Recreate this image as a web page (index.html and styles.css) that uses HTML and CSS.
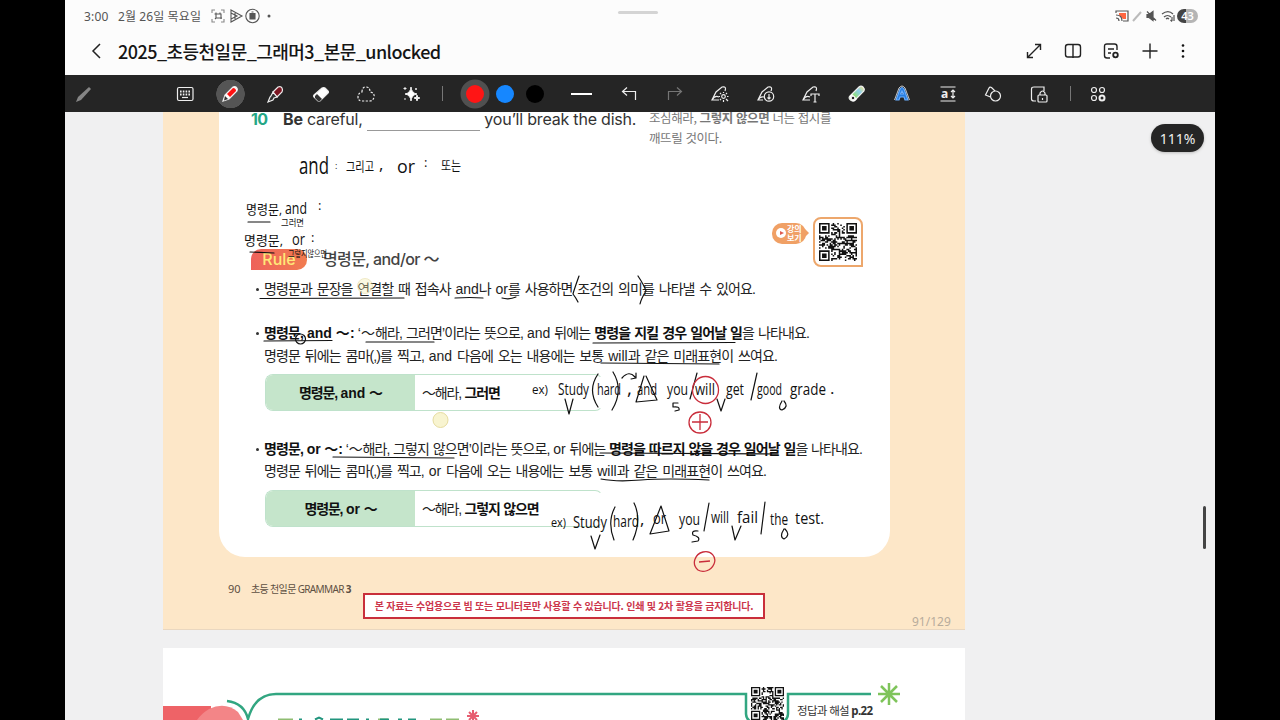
FILE: index.html
```
<!DOCTYPE html>
<html lang="ko">
<head>
  <meta charset="UTF-8">
  <meta name="viewport" content="width=device-width, initial-scale=1.0">
  <title>2025_초등천일문_그래머3_본문_unlocked</title>
  <link rel="stylesheet" href="styles.css">
</head>
<body>
  <div class="app">
    <!-- Status bar -->
    <div class="status-bar">
      <span class="time">3:00</span>
      <span class="date">2월 26일 목요일</span>
      <svg class="status-icons" width="62" height="16" viewBox="0 0 62 16" fill="none" stroke="#555" stroke-width="1.1">
        <path d="M1 5V2h3M10 2h3v3M13 11v3h-3M4 14H1v-3" stroke="#888"/>
        <path d="M3.500 6h6.500v5M5 4.500V10h6M9 4.500V6M4 11l1-1"/>
        <path d="M20 2l11 6-11 6zM20 5l6 3-6 3M24 5v6"/>
        <circle cx="41.500" cy="8" r="6.700"/><path d="M39 5.500h5V11h-5zM40.500 4h2" fill="#555"/>
        <circle cx="58" cy="8" r="1.500" fill="#555" stroke="none"/>
      </svg>
      <svg class="system-icons" width="62" height="16" viewBox="0 0 62 16" fill="none" stroke="#555" stroke-width="1.200">
        <path d="M1 5V3h12v10H8"/><path d="M4 5h7v6H8L4 7z" fill="#ff6742" stroke="none"/><path d="M1 7c4 0 6 2 6 6M1 10c2 0 3 1 3 3"/>
        <path d="M18 13l8-9" stroke="#bbb" stroke-width="2"/>
        <path d="M32 6.500h2l4-3v9l-4-3h-2zM32 3.500l9 9" fill="#555"/>
        <path d="M47 6c4-3 8-3 11 0M49 9c2-2 5-2 7 0M51 11c1-1 2-1 3 0M57 9v4M55.500 12l1.500 1.500M59 7v6"/>
      </svg>
      <span class="battery">43</span>
      <span class="handle"></span>
    </div>

    <!-- Title bar -->
    <header class="title-bar">
      <svg class="back" width="12" height="18" viewBox="0 0 12 18"><path d="M10 2L3 9l7 7"/></svg>
      <h1>2025_초등천일문_그래머3_본문_unlocked</h1>
      <div class="title-actions">
        <svg viewBox="0 0 20 20"><path d="M3.500 16.500l13-13M11 3.500h5.500V9M3.500 11v5.500H9"/></svg>
        <svg viewBox="0 0 20 20"><rect x="2.500" y="3.500" width="15" height="12.500" rx="2.500"/><path d="M10 3.500v13.500"/></svg>
        <svg viewBox="0 0 20 20"><path d="M9 17H6q-2.500 0-2.500-2.500v-9Q3.500 3 6 3h7.500Q16 3 16 5.500V9M7 8h6M7 12h3"/><circle cx="14.500" cy="14" r="2.300" stroke-width="1.800"/></svg>
        <svg viewBox="0 0 20 20"><path d="M10 2.500v15M2.500 10h15"/></svg>
        <svg viewBox="0 0 20 20" class="more"><circle cx="10" cy="4.500" r="1.300"/><circle cx="10" cy="10" r="1.300"/><circle cx="10" cy="15.500" r="1.300"/></svg>
      </div>
    </header>

    <!-- Pen toolbar -->
    <nav class="toolbar">
      <div class="pen-toggle"><svg viewBox="0 0 20 20"><path d="M2 18l2-5L15 3l2 2L7 16z" fill="#858585" stroke="none"/></svg></div>
      <div class="tools">
        <span><svg viewBox="0 0 20 20"><rect x="2.500" y="3.500" width="15.500" height="13" rx="1.500"/><path d="M5 7.500h10M5 10.500h10" stroke-dasharray="1.600 1.200" stroke-width="1.800"/><path d="M7 13.500h6"/></svg></span>
        <span class="active"><svg viewBox="0 0 20 20"><path d="M3 17l2-6 8-8q2-1 3.500.5T17 7l-8 8z" fill="#fff"/><path d="M7 10l6-6q3 0 3 3l-6 6z" fill="#f11" stroke="none"/><path d="M5 12l3 3-4 1.500z" fill="#333" stroke="none"/></svg></span>
        <span><svg viewBox="0 0 20 20"><path d="M8 8l5-5q3-1 4 1t0 4l-5 5z" fill="#7c1622"/><path d="M8 8l4 5-3 1-1 2-5 2 2-5 1-1z" fill="#333"/></svg></span>
        <span><svg viewBox="0 0 20 20"><path d="M3 11l8-7q2-1 3 0l3 3q1 1 0 2l-8 8H7l-4-4q-1-1 0-2z" fill="#fff"/><path d="M4 12l2-2 5 5-2 2H7l-3-3z" fill="#333" stroke="none"/></svg></span>
        <span><svg viewBox="0 0 20 20"><path d="M6 8q0-5 4-5t4 5q5 1 4 5-1 4-4 4H6q-4 0-4-4 0-4 4-5z" stroke-dasharray="2.200 1.500"/></svg></span>
        <span><svg viewBox="0 0 20 20"><path d="M10 3q.5 6 6 7-5.500 1-6 7-.5-6-6-7 5.500-1 6-7zM16 11q0 3 3 3-3 0-3 3 0-3-3-3 3 0 3-3zM4 3v3M2.500 4.500h3M15 4v2M14 5h2M4 14v2" fill="#fff" stroke-width="1"/></svg></span>
      </div>
      <i class="divider"></i>
      <div class="colors"><b class="red"></b><b class="blue"></b><b class="black"></b></div>
      <div class="tools more-tools">
        <span class="stroke-width"><i></i></span>
        <span><svg viewBox="0 0 20 20"><path d="M8 3.500L3.500 7.500 8 11.500M4 7.500h12.500V16"/></svg></span>
        <span class="disabled"><svg viewBox="0 0 20 20"><path d="M12 3.500l4.500 4-4.500 4M16 7.500H3.500V16"/></svg></span>
        <span><svg viewBox="0 0 20 20"><path d="M9 16H2l4-8 6-5q5-1 3 4M2 16q3-5 7-3"/><circle cx="13.500" cy="12.500" r="1.800"/><path d="M13.500 8v1M13.500 16v2M9 12.500h1M17 12.500h1.500M10 9l1 1M16 15l2 2M17 9l-1 1M10 16l1-1"/></svg></span>
        <span><svg viewBox="0 0 20 20"><path d="M7 16H2l4-8 6-5q5-1 3 4M2 16q2-4 6-3"/><circle cx="13" cy="12.500" r="4.700"/><path d="M13 10v5M11.500 13.500L13 15l1.500-1.500"/></svg></span>
        <span><svg viewBox="0 0 20 20"><path d="M9 16H2l4-8 6-5q5-1 3 4M2 16q3-5 7-3M10 12v-2h8v2M14 10v8M12.500 18h3"/></svg></span>
        <span><svg viewBox="0 0 20 20"><defs><linearGradient id="hl" x1="0" y1="1" x2="1" y2="0"><stop offset=".3" stop-color="#91e16b"/><stop offset=".65" stop-color="#8ccfeb"/><stop offset="1" stop-color="#ffe779"/></linearGradient></defs><path d="M3 12l9-9q2-2 4 0t1 4l-9 9q-2 2-4.500 0T3 12z" fill="url(#hl)"/><path d="M3 12l2-2 5 5-2 2q-2 1-4-1t-1-4z" fill="#fff" stroke="none"/><circle cx="6" cy="14" r="1.800" fill="#252525"/></svg></span>
        <span><svg viewBox="0 0 20 20"><path d="M4 16L8 5q2-3 4 0l4 11h-3l-1-3H8l-1 3zM8.500 10h3L10 7z" fill="#267de0" stroke="#6cafff"/><path d="M2.500 16L7 4q3-4 6 0l4.500 12" stroke-width=".8"/></svg></span>
        <span><svg viewBox="0 0 20 20"><path d="M2.500 3h15M2.500 17h15M15 6v8M13 8l2-2 2 2M13 12l2 2 2-2"/><text x="3" y="14" class="icon-a">a</text></svg></span>
        <span><svg viewBox="0 0 20 20"><path d="M7.500 13L2.500 11 6 4q1-1.500 2.500-.5L12 7"/><circle cx="12.500" cy="12" r="5"/></svg></span>
        <span><svg viewBox="0 0 20 20"><path d="M7 17H5q-2.500 0-2.500-2V5q0-2 2.500-2h10v4"/><rect x="9" y="11" width="9" height="7" rx="1"/><path d="M11 11V9q2.500-4 5 0v2M13.500 14v2"/></svg></span>
      </div>
      <i class="divider"></i>
      <div class="tools last"><span><svg viewBox="0 0 20 20"><circle cx="6" cy="6" r="2.500"/><circle cx="14" cy="6" r="2.500"/><circle cx="6" cy="14" r="2.500"/><circle cx="14" cy="14" r="2.500" stroke-width="2"/></svg></span></div>
    </nav>

    <main class="workspace">
      <article class="page">
        <section class="card">
          <div class="question">
            <b class="number">10</b>
            <p class="sentence"><b>Be</b> careful, <span class="blank"></span> you’ll break the dish.</p>
            <p class="hint">조심해라, <b>그렇지 않으면</b> 너는 접시를<br>깨뜨릴 것이다.</p>
          </div>
          <div class="lecture">
            <span class="lecture-label"><i></i>강의<br>보기</span>
            <div class="qr-frame"><svg class="qr" data-seed="7"></svg></div>
          </div>
          <div class="rule-title"><b>Rule</b><h2>명령문, and/or ～</h2></div>
          <ul class="rules">
            <li><p class="w-491">명령문과 문장을 연결할 때 접속사 <i>and</i>나 <i>or</i>를 사용하면 조건의 의미를 나타낼 수 있어요.</p></li>
            <li>
              <p class="w-545"><b>명령문, <i>and</i> ～:</b> ‘～해라, 그러면’이라는 뜻으로, <i>and</i> 뒤에는 <b>명령을 지킬 경우 일어날 일</b>을 나타내요.</p>
              <p class="w-513">명령문 뒤에는 콤마(,)를 찍고, <i>and</i> 다음에 오는 내용에는 보통 <i>will</i>과 같은 미래표현이 쓰여요.</p>
              <div class="pattern"><b>명령문, <i>and</i> ～</b><span>～해라, <b>그러면</b></span></div>
            </li>
            <li>
              <p class="w-598"><b>명령문, <i>or</i> ～:</b> ‘～해라, 그렇지 않으면’이라는 뜻으로, <i>or</i> 뒤에는 <b>명령을 따르지 않을 경우 일어날 일</b>을 나타내요.</p>
              <p class="w-502">명령문 뒤에는 콤마(,)를 찍고, <i>or</i> 다음에 오는 내용에는 보통 <i>will</i>과 같은 미래표현이 쓰여요.</p>
              <div class="pattern"><b>명령문, <i>or</i> ～</b><span>～해라, <b>그렇지 않으면</b></span></div>
            </li>
          </ul>
        </section>
        <footer>
          <span class="folio">90</span>
          <span class="book">초등 천일문 GRAMMAR <b>3</b></span>
          <strong class="notice">본 자료는 수업용으로 빔 또는 모니터로만 사용할 수 있습니다. 인쇄 및 2차 활용을 금지합니다.</strong>
          <span class="page-count">91/129</span>
        </footer>
      </article>

      <article class="page next-page">
        <svg class="page-art" viewBox="163 648 802 72" fill="none">
          <path d="M163 706h48v14h-48z" fill="#ee6367"/>
          <path d="M197 720q4-6 12-11 16-8 29 3l5 8z" fill="#f38587"/>
          <path d="M227 701q17 2 21 18 7-25 28-25h470v20q0 5 5 8M783 722q5-3 5-8v-20h83" stroke="#32a681" stroke-width="2.500"/>
          <path d="M278 719.500h15M378 719.500h10M430 719.500h12M446 719.500h13" stroke="#8fbd72" stroke-width="2"/>
          <path d="M299 719.500h3M315 719.500l4-2 4 2M330 719.500h13M347 719.500h12M366 719.500h3M380 719.500h9M398 719.500h4M408 719.500h8" stroke="#22957e" stroke-width="2"/>
          <path d="M473 710v12M467 716h12M469 712l8 8M477 712l-8 8" stroke="#e75d70" stroke-width="2"/>
          <path d="M889 683v22M878 694h22M881 686l16 16M897 686l-16 16" stroke="#7fc45b" stroke-width="2.500"/>
        </svg>
        <div class="answers"><svg class="qr small" data-seed="19"></svg><span>정답과 해설 <b>p.22</b></span></div>
      </article>

      <!-- Handwritten notes -->
      <svg class="ink" viewBox="65 112 1150 608">
        <g class="hand">
          <text x="299" y="174" textLength="30" lengthAdjust="spacingAndGlyphs" class="xl">and</text><text x="335" y="169" class="sm">:</text>
          <text x="346" y="171" textLength="28" lengthAdjust="spacingAndGlyphs" class="kr">그리고</text><text x="379" y="170">,</text>
          <text x="397" y="173" textLength="18" lengthAdjust="spacingAndGlyphs" class="lg">or</text><text x="424" y="167" class="md">:</text>
          <text x="441" y="170" textLength="20" lengthAdjust="spacingAndGlyphs" class="kr">또는</text>
          <text x="246" y="214" textLength="36" lengthAdjust="spacingAndGlyphs" class="kr">명령문,</text><text x="285" y="214" textLength="22" lengthAdjust="spacingAndGlyphs">and</text><text x="318" y="210" class="md">:</text>
          <text x="281" y="226" textLength="23" lengthAdjust="spacingAndGlyphs" class="kr sm">그러면</text>
          <text x="244" y="245" textLength="39" lengthAdjust="spacingAndGlyphs" class="kr">명령문,</text><text x="292" y="245" textLength="13" lengthAdjust="spacingAndGlyphs">or</text><text x="311" y="242" class="md">:</text>
          <text x="288" y="257" textLength="39" lengthAdjust="spacingAndGlyphs" class="kr sm">그렇지않으면</text>
          <text x="532" y="394" textLength="16" lengthAdjust="spacingAndGlyphs" class="md">ex)</text><text x="558" y="395" textLength="31" lengthAdjust="spacingAndGlyphs">Study</text><text x="597" y="395" textLength="24" lengthAdjust="spacingAndGlyphs">hard</text><text x="627" y="395" class="lg">,</text><text x="637" y="395" textLength="20" lengthAdjust="spacingAndGlyphs">and</text>
          <text x="667" y="395" textLength="21" lengthAdjust="spacingAndGlyphs">you</text><text x="695" y="395" textLength="20" lengthAdjust="spacingAndGlyphs">will</text><text x="726" y="395" textLength="18" lengthAdjust="spacingAndGlyphs">get</text><text x="757" y="395" textLength="25" lengthAdjust="spacingAndGlyphs">good</text><text x="790" y="395" textLength="36" lengthAdjust="spacingAndGlyphs">grade</text><text x="830" y="394">.</text>
          <text x="551" y="527" textLength="15" lengthAdjust="spacingAndGlyphs" class="md">ex)</text><text x="573" y="528" textLength="34" lengthAdjust="spacingAndGlyphs">Study</text><text x="613" y="527" textLength="26" lengthAdjust="spacingAndGlyphs">hard</text><text x="640" y="525">,</text><text x="653" y="524" textLength="13" lengthAdjust="spacingAndGlyphs">or</text>
          <text x="679" y="525" textLength="21" lengthAdjust="spacingAndGlyphs">you</text><text x="711" y="523" textLength="18" lengthAdjust="spacingAndGlyphs">will</text><text x="737" y="523" textLength="21" lengthAdjust="spacingAndGlyphs">fail</text><text x="770" y="525" textLength="18" lengthAdjust="spacingAndGlyphs">the</text><text x="795" y="524" textLength="29" lengthAdjust="spacingAndGlyphs">test.</text>
        </g>
        <path class="stroke" d="M248 222h22M250 252l24 1M260 298.500l144-.5M455 298q15-1 28 0M502 298q7 2 14-1M264 341l68-.5M366 342h68M593 343l142-.5M601 363l118 1M333 457l121 1M600 453l178 1M601 479q15 3 40 1t68 0"/>
        <circle class="stroke" cx="300.500" cy="339" r="5"/>
        <path class="stroke" d="M579 276q-5 14-6 18 3 4 5 8M638 276q6 9 8 15-5 8-6 13M565 399l4 15 4-15M598 374q-11 16 0 33M613 372q11 18-1 38M622 378q7-8 13-1M636 373v5l-5 1M644 376l-8 26 21-2-11-24M697 373l-7 26M678 403h-5v4q7-1 6 3l-4 1M717 399l4 12 4-12M757 373l-6 27M782 401q-5 8 0 9 7-3 2-9M591 536l4 13 5-14M615 507q-8 15-1 33M634 503q8 16-1 37M661 506l-11 28 19-3-8-25M709 503l-5 28M698 531q-7-1-5 4 8 2 5 6l-6 1M732 526l3 14 6-14M765 502l-4 32M784 529q-5 8 0 10 7-4 1-10"/>
        <g class="red-ink"><ellipse cx="705.500" cy="390" rx="13" ry="13.500"/><ellipse cx="700" cy="422.500" rx="11" ry="10.500"/><path d="M692 422h16M700 414v16M698 570c-7-6-3-16 5-18s14 5 11 12-11 9-16 6zM699 562l11-1"/></g>
        <g class="marker"><circle class="faint" cx="365" cy="286" r="7.500"/><circle cx="440.500" cy="420" r="7.500"/></g>
      </svg>
      <span class="zoom-level">111%</span>
      <span class="scrollbar"></span>
    </main>
  </div>
  <script src="script.js"></script>
</body>
</html>
```
FILE: styles.css
```
* {
  box-sizing: border-box;
}

body {
  margin: 0;
  background: #000;
  font-family: "Noto Sans", "Noto Sans CJK KR", sans-serif;
}

h1, h2, p, ul {
  margin: 0;
  padding: 0;
}

.app {
  width: 1150px;
  height: 720px;
  margin: 0 auto;
  overflow: hidden;
  background: #fcfcfc;
  display: flex;
  flex-direction: column;
}

.status-bar {
  position: relative;
  display: flex;
  align-items: center;
  height: 32px;
  padding: 0 17px 0 19px;
  font-size: 12px;
  color: #555;
}

.time {
  width: 34px;
  letter-spacing: 0.2px;
}

.date {
  width: 84px;
  letter-spacing: 0.1px;
  white-space: nowrap;
}

.status-icons {
  margin-left: 9px;
}

.system-icons {
  margin-left: auto;
}

.battery {
  width: 21px;
  height: 14px;
  border-radius: 7px;
  background: linear-gradient(90deg, #444 43%, #b5b5b5 43%);
  color: #fff;
  font-size: 11px;
  line-height: 14px;
  text-align: center;
  font-weight: 600;
}

.handle {
  position: absolute;
  left: 553px;
  top: 11px;
  width: 40px;
  height: 3px;
  border-radius: 2px;
  background: #d4d4d4;
}

.title-bar {
  height: 43px;
  display: flex;
  align-items: center;
  padding: 0 22px 6px 25px;
}

.back {
  fill: none;
  stroke: #222;
  stroke-width: 1.5;
}

h1 {
  margin-left: 16px;
  font-size: 18px;
  font-weight: 500;
  color: #151515;
  font-family: "Noto Sans CJK KR", sans-serif;
  letter-spacing: -0.53px;
  white-space: nowrap;
}

.title-actions {
  margin-left: auto;
  display: flex;
  gap: 18.500px;
}

.title-actions svg,
.toolbar svg {
  width: 20px;
  height: 20px;
  fill: none;
  stroke: #222;
  stroke-width: 1.4;
  overflow: visible;
}

.title-actions svg:last-child {
  margin-left: -5px;
}

.title-actions .more {
  fill: #111;
  stroke: none;
}

.toolbar {
  position: relative;
  height: 37px;
  flex: none;
  background: #252525;
  display: flex;
  align-items: center;
}

.pen-toggle {
  width: 38px;
  padding-left: 9px;
  display: flex;
  align-items: center;
}

.toolbar svg {
  stroke: #eee;
  stroke-width: 1.2;
}

.tools {
  display: flex;
  margin-left: 59.5px;
}

.tools span {
  width: 45.200px;
  height: 36px;
  display: flex;
  align-items: center;
  justify-content: center;
}

.tools .active {
  background: radial-gradient(circle, #555 14px, transparent 14.500px);
}

.disabled {
  opacity: 0.4;
}

.divider {
  width: 1px;
  height: 15px;
  background: #777;
  margin-left: 8.5px;
}

.colors {
  display: flex;
  gap: 12px;
  margin-left: 22.5px;
}

.colors b {
  width: 18px;
  height: 18px;
  border-radius: 50%;
}

.colors .red {
  background: #ff1515;
  box-shadow: 0 0 0 5.500px #505050;
}

.colors .blue {
  background: #1687ff;
}

.colors .black {
  background: #000;
}

.more-tools {
  margin-left: 15.5px;
}

.more-tools span {
  width: 45.500px;
}

.more-tools .stroke-width {
  margin-right: 2px;
}

.stroke-width i {
  width: 21px;
  height: 2px;
  background: #fff;
}

.icon-a {
  font: 700 12px "Noto Sans", sans-serif;
  fill: #eee;
  stroke: none;
}

.tools.last {
  margin-left: 4px;
}

.workspace {
  position: relative;
  flex: 1;
  overflow: hidden;
  background: #f0f0f1;
}

.page {
  width: 802px;
  height: 530px;
  margin: -12px 0 0 98px;
  background: #fde7c8;
  border-bottom: 1px solid #e9d7c0;
}

.card {
  position: relative;
  width: 671px;
  height: 457px;
  margin-left: 56px;
  padding-left: 32px;
  background: #fff;
  border-radius: 0 0 26px 26px;
}

.question {
  display: flex;
  height: 117px;
  padding-top: 7px;
}

.number {
  width: 32px;
  font: 700 16px/25px Inter, sans-serif;
  letter-spacing: -0.6px;
  color: #25a786;
}

.sentence {
  width: 366px;
  font: 16px/25px Inter, sans-serif;
  letter-spacing: -0.2px;
  color: #333;
  white-space: nowrap;
}

.blank {
  display: inline-block;
  width: 113px;
  height: 10px;
  border-bottom: 1px solid #999;
  vertical-align: -6px;
}

.hint {
  padding-top: 1px;
  font: 12.500px/20px "Noto Sans CJK KR", sans-serif;
  color: #777;
  letter-spacing: -0.4px;
  white-space: nowrap;
}

.lecture {
  position: absolute;
  left: 553px;
  top: 117px;
  display: flex;
  gap: 7px;
}

.lecture-label {
  position: relative;
  width: 34px;
  height: 21px;
  margin-top: 6px;
  padding: 1px 0 0 15px;
  border-radius: 10px;
  background: #f0a065;
  color: #fff;
  font-size: 8px;
  font-weight: 700;
  line-height: 9px;
}

.lecture-label::after {
  content: "";
  position: absolute;
  right: -3px;
  top: 6px;
  border: 4px solid transparent;
  border-left-color: #f0a065;
  border-right: 0;
}

.lecture-label i {
  position: absolute;
  left: 4px;
  top: 5px;
  width: 10px;
  height: 10px;
  border-radius: 50%;
  background: #fff;
}

.lecture-label i::after {
  content: "";
  position: absolute;
  left: 4px;
  top: 2.500px;
  border: 2.500px solid transparent;
  border-left: 4px solid #df5c50;
  border-right: 0;
}

.qr-frame {
  width: 50px;
  height: 50px;
  border: 2px solid #eda76c;
  border-radius: 8px 8px 0 8px;
  padding: 4px;
}

.qr {
  display: block;
  width: 38px;
  height: 38px;
}

.rule-title {
  display: flex;
  align-items: center;
  height: 24px;
  margin-top: 30px;
}

.rule-title b {
  width: 56px;
  height: 21px;
  border-radius: 10px 10px 10px 0;
  background: linear-gradient(90deg, #ee625b, #f17c50);
  color: #ffe878;
  font: 500 16px/20px Inter, sans-serif;
  text-align: center;
}

h2 {
  margin-left: 16px;
  color: #444;
  font: 500 16px/24px Inter, "Noto Sans CJK KR", sans-serif;
  letter-spacing: -0.6px;
  white-space: nowrap;
}

.rules {
  list-style: none;
  margin-left: 13px;
  padding-top: 7px;
  font: 14px/22.500px "Liberation Sans", "Noto Sans CJK KR", sans-serif;
  letter-spacing: -0.9px;
  color: #222;
}

.rules i {
  font-style: normal;
  letter-spacing: 0;
}

.rules li {
  position: relative;
  margin-bottom: 21.500px;
}

.rules li + li + li {
  margin-top: 26.500px;
}

.rules li::before {
  content: "";
  position: absolute;
  left: -8px;
  top: 10px;
  width: 3px;
  height: 3px;
  border-radius: 50%;
  background: #333;
}

.rules p {
  white-space: nowrap;
  text-align: justify;
  text-align-last: justify;
}

.rules b {
  color: #111;
}

.w-491 { width: 491px; }
.w-545 { width: 545px; }
.w-513 { width: 513px; }
.w-598 { width: 598px; }
.w-502 { width: 502px; }

.pattern {
  display: flex;
  width: 338px;
  height: 37px;
  margin-top: 7px;
  margin-left: 1px;
  border: 1px solid #bfe2cb;
  border-right-color: transparent;
  border-radius: 8px;
  line-height: 36px;
  letter-spacing: -1.2px;
  word-spacing: 1px;
  overflow: hidden;
}

.pattern > b {
  width: 149px;
  background: #c5e5cb;
  text-align: center;
}

.pattern > span {
  padding-left: 7px;
}

footer {
  display: flex;
  position: relative;
  height: 72px;
  padding: 22px 0 0 65px;
  font: 10px/20px "Noto Sans", "Noto Sans CJK KR", sans-serif;
  color: #5d5043;
}

.folio {
  width: 23px;
  font-size: 11px;
}

.book {
  width: 112px;
  letter-spacing: -0.65px;
  white-space: nowrap;
}

.notice {
  width: 402px;
  height: 26px;
  margin-top: 14px;
  border: 2px solid #c92f3b;
  background: #fff;
  color: #cc354b;
  font: 700 10px/21px "Noto Sans CJK KR", sans-serif;
  letter-spacing: -0.2px;
  text-align: center;
  white-space: nowrap;
}

.page-count {
  margin: 33px 0 0 147px;
  font-size: 12px;
  color: #b8ac9c;
}

.next-page {
  position: relative;
  height: 72px;
  margin-top: 18px;
  background: #fff;
  border: 0;
}

.page-art {
  position: absolute;
  inset: 0;
  width: 802px;
  height: 72px;
}

.answers {
  position: relative;
  display: flex;
  gap: 13px;
  padding: 39px 0 0 588px;
  font: 11.500px/17px "Noto Sans", "Noto Sans CJK KR", sans-serif;
  color: #333;
}

.answers .small {
  width: 33px;
  height: 33px;
}

.answers span {
  padding-top: 15px;
  white-space: nowrap;
  letter-spacing: -0.65px;
}

.ink {
  position: absolute;
  inset: 0;
  width: 1150px;
  height: 608px;
}

.hand {
  font: 17px "Open Sans", "Noto Sans CJK KR", sans-serif;
  fill: #111;
}

.hand .xl { font-size: 24px; }
.hand .lg { font-size: 19px; }
.hand .md { font-size: 13px; }
.hand .kr { font-size: 13px; }
.hand .sm { font-size: 9px; }

.stroke {
  fill: none;
  stroke: #111;
  stroke-width: 1.2;
  stroke-linecap: round;
  stroke-linejoin: round;
}

.red-ink {
  fill: none;
  stroke: #c92d3b;
  stroke-width: 1.3;
}

.marker {
  fill: #f3edb0;
  fill-opacity: 0.6;
  stroke: #e6dca0;
}

.marker .faint {
  opacity: 0.6;
}

.zoom-level {
  position: absolute;
  left: 1086px;
  top: 12px;
  width: 53px;
  height: 28px;
  border-radius: 14px;
  background: #252525;
  color: #eee;
  font-size: 14px;
  line-height: 29px;
  text-align: center;
  box-shadow: 0 1px 3px #bbb;
}

.scrollbar {
  position: absolute;
  left: 1138px;
  top: 394px;
  width: 3px;
  height: 43px;
  border-radius: 2px;
  background: #444;
}
```
FILE: script.js
```
// Fill the QR blocks: three finder squares plus data modules
const SIZE = 25;

document.querySelectorAll('.qr').forEach((svg) => {
  let seed = Number(svg.dataset.seed);
  let d = '';
  const finders = [[0, 0], [SIZE - 7, 0], [0, SIZE - 7]];

  for (let y = 0; y < SIZE; y++) {
    for (let x = 0; x < SIZE; x++) {
      seed = (seed * 1103515245 + 12345) % 2147483648;
      let on = seed / 2147483648 > 0.48;
      finders.forEach(([fx, fy]) => {
        const dist = Math.max(Math.abs(x - fx - 3), Math.abs(y - fy - 3));
        if (dist <= 4) on = dist === 3 || dist <= 1;
      });
      if (on) d += `M${x} ${y}h1v1h-1z`;
    }
  }

  svg.setAttribute('viewBox', `0 0 ${SIZE} ${SIZE}`);
  svg.innerHTML = `<path d="${d}" fill="#111"/>`;
});
```
